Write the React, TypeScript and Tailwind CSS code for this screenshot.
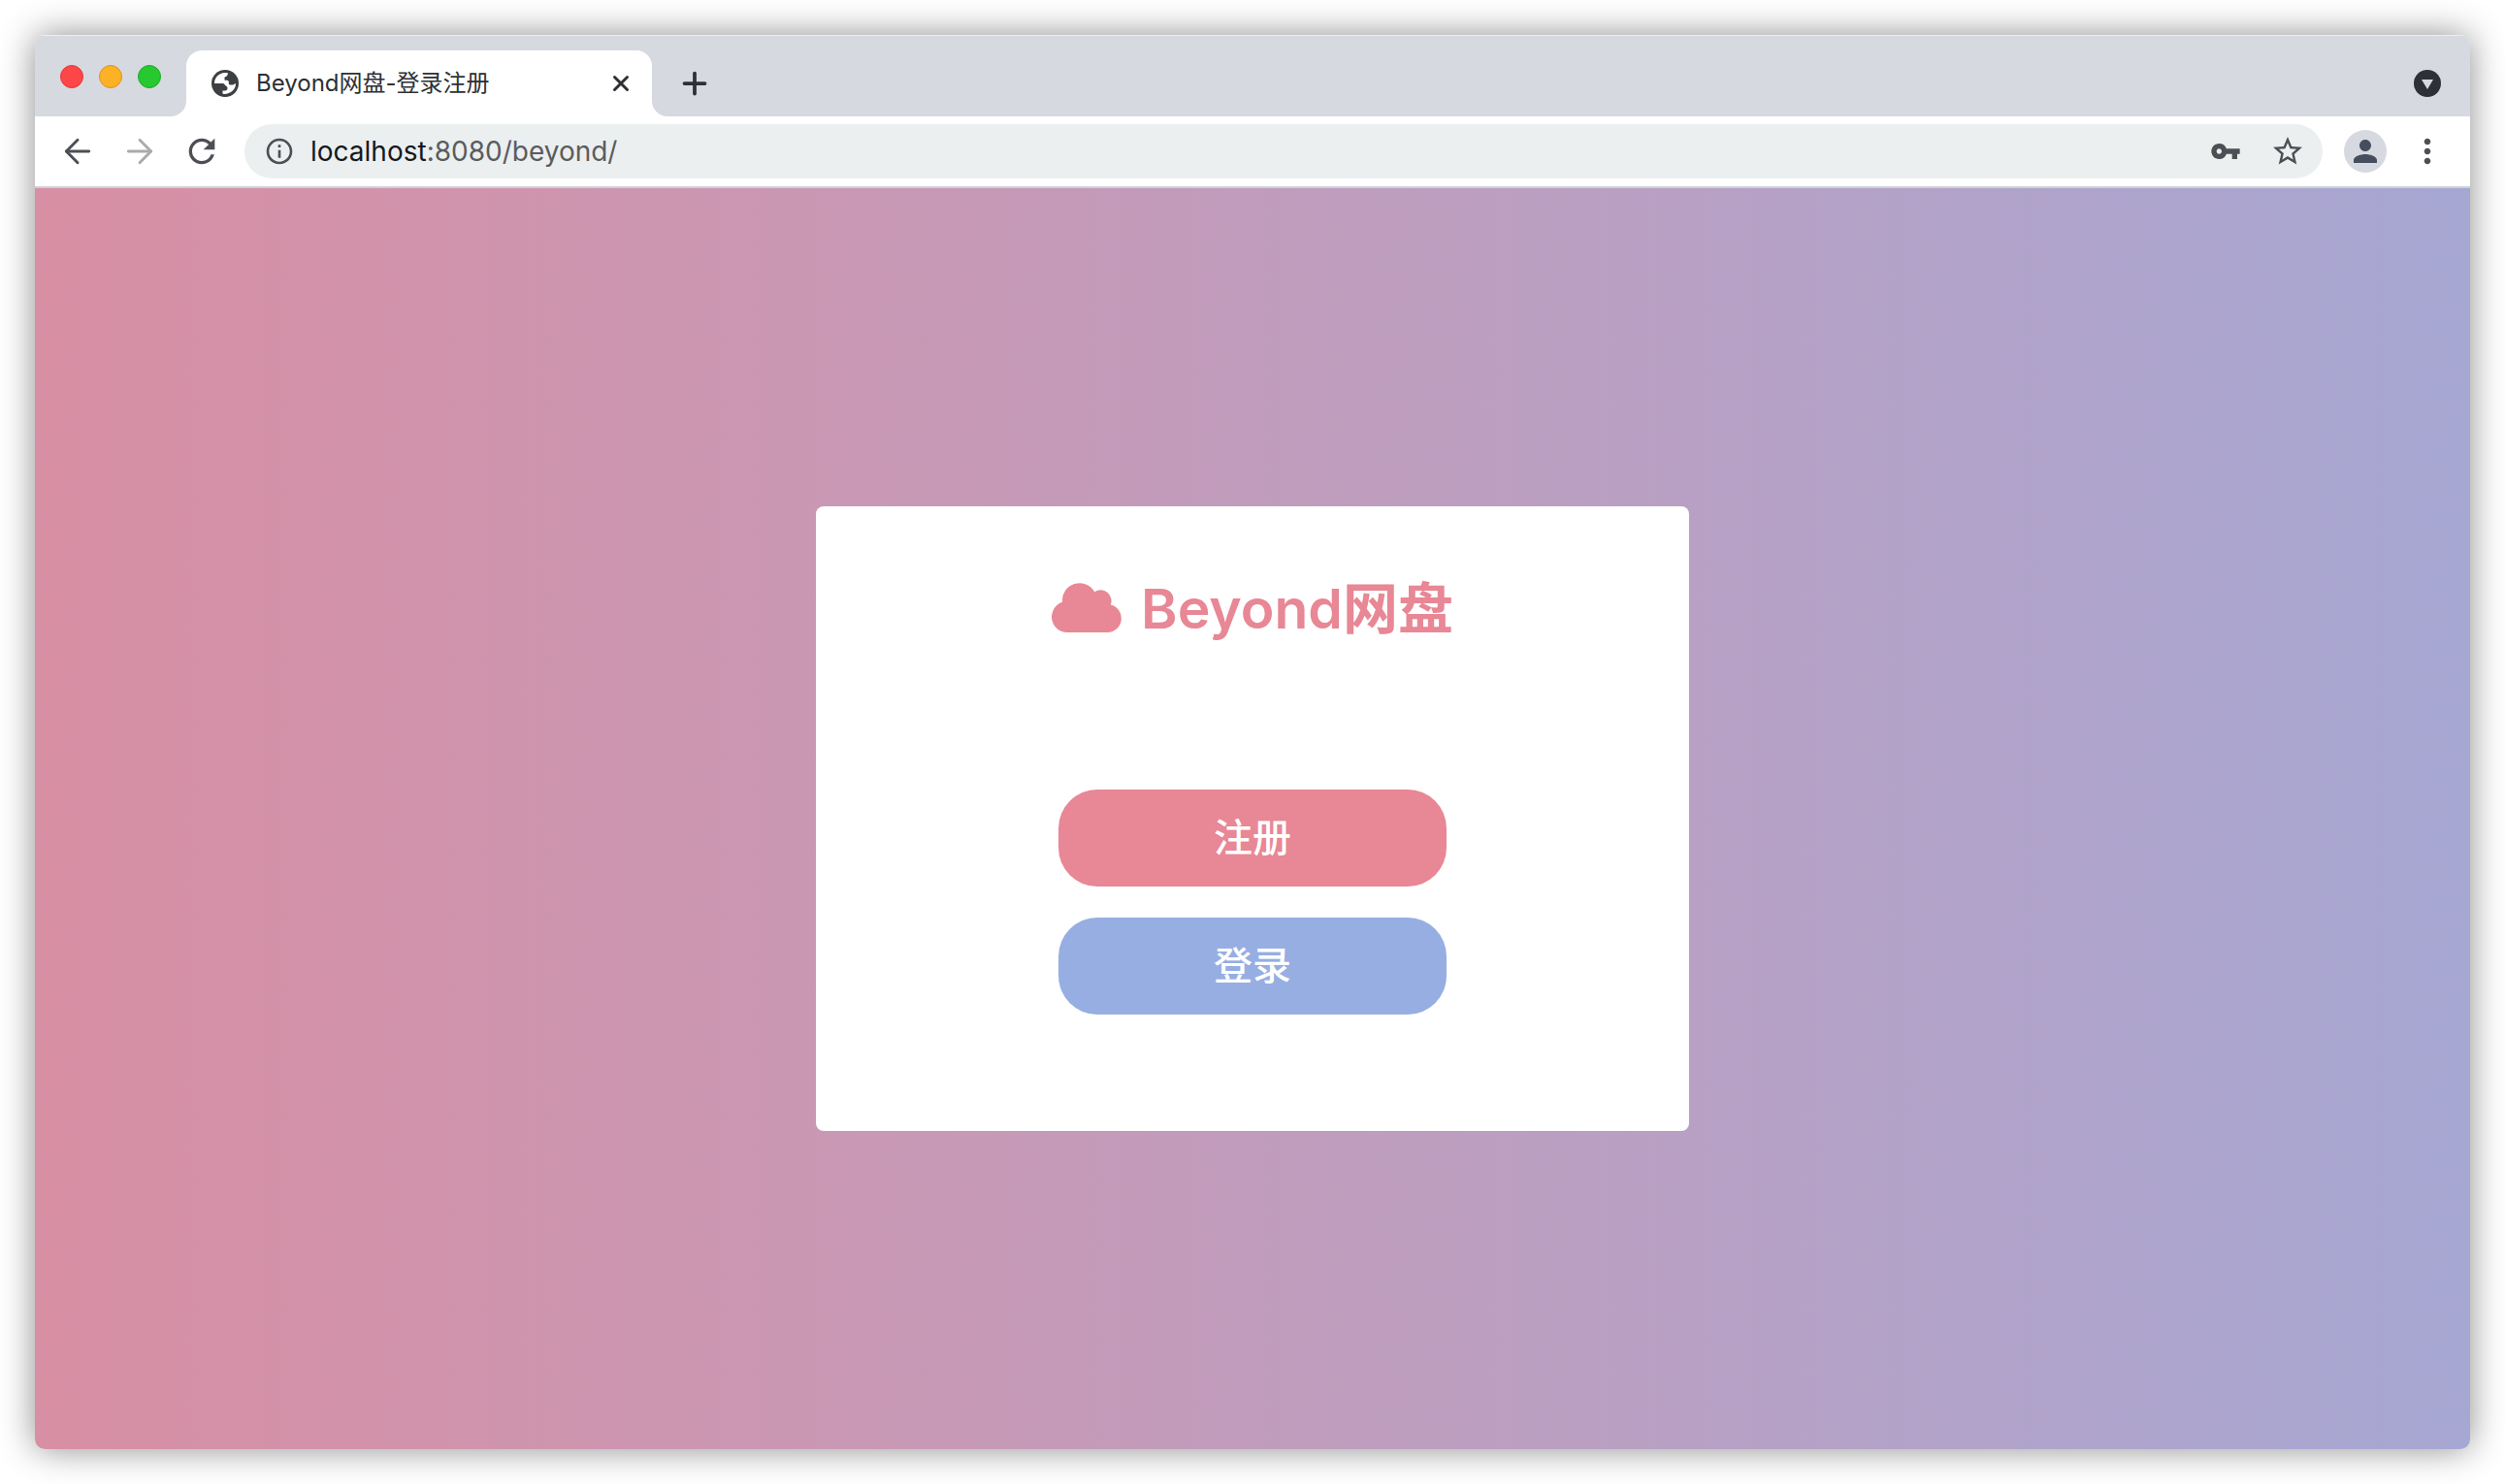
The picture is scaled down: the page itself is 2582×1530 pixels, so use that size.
import { ArrowLeft, ArrowRight, Plus, X } from 'lucide-react';
import { MdInfoOutline, MdMoreVert, MdPerson, MdRefresh, MdStarBorder, MdVpnKey } from 'react-icons/md';

function GlobeIcon() {
  return (
    <svg viewBox="0 0 28 28" className="size-7 shrink-0" aria-hidden="true">
      <circle cx="14" cy="14" r="14" fill="#3c4043" />
      <path
        d="M3 14C3 8 7.5 3 14 3c1 0 2 .1 3 .4C16.8 5.500 15.500 7 13.500 7.500v3.300H16c1 0 1.800.8 1.800 1.800V14c0 .8.700 1.500 1.500 1.500h2.700L25 14c.2 6.500-6 11.600-13.500 10.800V21.500H14c1.500 0 2.500-1.200 2.500-2.500s-1-2.500-2.500-3c-.5-1.500-1.500-2-3-2z"
        fill="#fff"
      />
    </svg>
  );
}

function CloudIcon() {
  return (
    <svg viewBox="0 0 72 51" className="mb-1 h-[51px] w-[72px]" fill="currentColor" aria-hidden="true">
      <path d="M16 51A16 16 0 0 1 11 19.8A17.8 17.8 0 0 1 44.2 9.2A11.2 11.2 0 0 1 60.8 22.6A14.4 14.4 0 0 1 57.6 51Z" />
    </svg>
  );
}

function TabBar() {
  return (
    <div className="flex h-[84px] items-end border-t border-[#eceef1] bg-[#d6d9e0]">
      <div className="flex gap-4 self-center pl-[26px] pr-[10px]">
        <span className="size-6 rounded-full border border-[#e0383d] bg-[#fc4648]" />
        <span className="size-6 rounded-full border border-[#dc9324] bg-[#fdb124]" />
        <span className="size-6 rounded-full border border-[#1dab27] bg-[#28c831]" />
      </div>
      <svg viewBox="0 0 16 16" className="size-4" fill="#fff" aria-hidden="true">
        <path d="M16 0v16H0A16 16 0 0 0 16 0Z" />
      </svg>
      <div className="flex h-[68px] w-[480px] items-center rounded-t-2xl bg-white pl-[26px] pr-[19px]">
        <GlobeIcon />
        <span className="ml-[18px] flex-1 truncate text-2xl text-[#2d3034]">Beyond网盘-登录注册</span>
        <button type="button" aria-label="关闭标签页" className="text-[#2d3034]">
          <X size={26} strokeWidth={2.75} />
        </button>
      </div>
      <svg viewBox="0 0 16 16" className="size-4" fill="#fff" aria-hidden="true">
        <path d="M0 0v16h16A16 16 0 0 1 0 0Z" />
      </svg>
      <button type="button" aria-label="新标签页" className="flex h-[68px] items-center pl-[10px] text-[#2d3034]">
        <Plus size={36} strokeWidth={2.5} />
      </button>
      <button type="button" aria-label="搜索标签页" className="ml-auto flex h-[68px] items-center pr-[30px]">
        <svg viewBox="0 0 28 28" className="size-7" aria-hidden="true">
          <circle cx="14" cy="14" r="14" fill="#2d3034" />
          <path d="M8 10h12l-6 10Z" fill="#d6d9e0" />
        </svg>
      </button>
    </div>
  );
}

function Toolbar() {
  return (
    <div className="flex h-[74px] items-center border-b-2 border-[#cdd1d6] bg-white px-6 text-[#4c4f54]">
      <button type="button" aria-label="后退" className="mr-6">
        <ArrowLeft size={40} strokeWidth={1.75} />
      </button>
      <button type="button" aria-label="前进" className="mr-6 text-[#a9abad]">
        <ArrowRight size={40} strokeWidth={1.75} />
      </button>
      <button type="button" aria-label="重新加载" className="mr-6">
        <MdRefresh size={40} />
      </button>
      <div className="flex h-14 flex-1 items-center rounded-full bg-[#ebeff0] pl-5 pr-[18px]">
        <MdInfoOutline size={32} />
        <a href="#" className="ml-4 flex-1 text-[28px] leading-9 text-[#5a5c5e]">
          <span className="text-[#17191b]">localhost</span>:8080/beyond/
        </a>
        <button type="button" aria-label="密码" className="mr-[30px]">
          <MdVpnKey size={32} />
        </button>
        <button type="button" aria-label="收藏">
          <MdStarBorder size={36} />
        </button>
      </div>
      <button
        type="button"
        aria-label="用户"
        className="ml-[22px] flex size-11 items-center justify-center rounded-full bg-[#d6d9e0] text-[#454e5e]"
      >
        <MdPerson size={36} />
      </button>
      <button type="button" aria-label="更多" className="ml-[22px]">
        <MdMoreVert size={40} />
      </button>
    </div>
  );
}

export default function App() {
  return (
    <div className="min-h-screen bg-white p-9 font-[Inter,'Noto_Sans_CJK_SC',sans-serif]">
      <div className="flex min-h-[calc(100vh-72px)] flex-col overflow-hidden rounded-[10px] shadow-[0_0_36px_rgba(0,0,0,0.45)]">
        <TabBar />
        <Toolbar />
        <main className="flex flex-1 items-center justify-center bg-linear-to-r from-[#d88fa4] to-[#a6a7d3]">
          <div className="flex w-[900px] flex-col items-center rounded-lg bg-white pt-[68px] pb-[120px]">
            <h1 className="flex items-center gap-5 text-[57px] leading-[76px] font-semibold text-[#e88795]">
              <CloudIcon />
              Beyond网盘
            </h1>
            <div className="mt-[148px] flex flex-col gap-8">
              <button type="button" className="h-[100px] w-[400px] rounded-[40px] bg-[#e88795] text-[40px] font-medium text-white">
                注册
              </button>
              <button type="button" className="h-[100px] w-[400px] rounded-[40px] bg-[#97aee2] text-[40px] font-medium text-white">
                登录
              </button>
            </div>
          </div>
        </main>
      </div>
    </div>
  );
}
